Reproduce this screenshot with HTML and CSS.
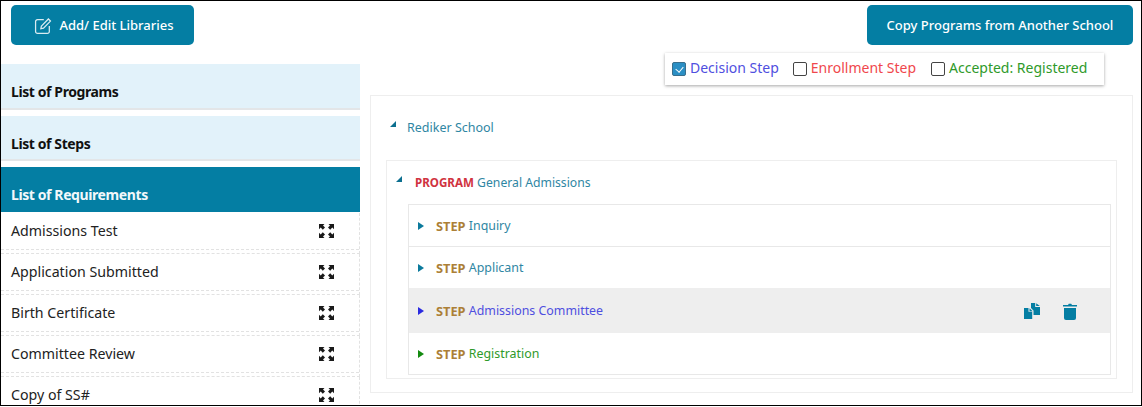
FILE: index.html
```html
<!DOCTYPE html>
<html lang="en">
<head>
    <meta charset="UTF-8">
    <meta name="viewport" content="width=device-width, initial-scale=1.0">
    <title>Programs</title>
    <link rel="stylesheet" href="styles.css">
</head>
<body>
    <div class="frame">
        <div class="top-bar">
            <button type="button" class="btn btn-libraries">
                <svg class="edit-icon" viewBox="0 0 18 18" width="19" height="19" fill="none" stroke="currentColor" stroke-width="1.2">
                    <path d="M14.500 9.500v5.200a1.800 1.800 0 0 1-1.800 1.800H3.300a1.800 1.800 0 0 1-1.800-1.800V5.300a1.800 1.800 0 0 1 1.800-1.800h6"/>
                    <path d="M7 9.600 13.600 2.800l2 2L9 11.600l-2.500.5z"/>
                </svg>
                Add/ Edit Libraries
            </button>
            <button type="button" class="btn btn-copy">Copy Programs from Another School</button>
        </div>

        <div class="content">
            <div class="sidebar">
                <div class="side-head">List of Programs</div>
                <div class="side-head side-head-steps">List of Steps</div>
                <div class="side-head active">List of Requirements</div>
                <div class="req-row"><span>Admissions Test</span><svg class="expand"><use href="#expand-icon"/></svg></div>
                <div class="req-row"><span>Application Submitted</span><svg class="expand"><use href="#expand-icon"/></svg></div>
                <div class="req-row"><span>Birth Certificate</span><svg class="expand"><use href="#expand-icon"/></svg></div>
                <div class="req-row"><span>Committee Review</span><svg class="expand"><use href="#expand-icon"/></svg></div>
                <div class="req-row"><span>Copy of SS#</span><svg class="expand"><use href="#expand-icon"/></svg></div>
            </div>

            <div class="main">
                <div class="legend">
                    <label class="legend-item blue"><input type="checkbox" checked>Decision Step</label>
                    <label class="legend-item red"><input type="checkbox">Enrollment Step</label>
                    <label class="legend-item green"><input type="checkbox">Accepted: Registered</label>
                </div>

                <div class="tree">
                    <div class="school"><svg class="arrow-open" viewBox="0 0 8 8"><path d="M7 1v6H1z"/></svg>Rediker School</div>
                    <div class="program">
                        <div class="program-title"><svg class="arrow-open" viewBox="0 0 8 8"><path d="M7 1v6H1z"/></svg><b class="tag-program">PROGRAM</b> General Admissions</div>
                        <div class="steps">
                            <div class="step step-inquiry"><svg class="arrow" viewBox="0 0 6 8"><path d="M0 0l6 4-6 4z"/></svg><b class="tag-step">STEP</b>&nbsp;Inquiry</div>
                            <div class="step step-applicant"><svg class="arrow" viewBox="0 0 6 8"><path d="M0 0l6 4-6 4z"/></svg><b class="tag-step">STEP</b>&nbsp;Applicant</div>
                            <div class="step step-committee">
                                <svg class="arrow" viewBox="0 0 6 8"><path d="M0 0l6 4-6 4z"/></svg><b class="tag-step">STEP</b>&nbsp;Admissions Committee
                                <div class="step-actions">
                                    <svg viewBox="0 0 18 18" width="18" height="18" fill="#047ea3">
                                        <path d="M1 6h4.500v3.800h3.700V17H1z"/>
                                        <path d="M6.500 6.200 9.700 9.200H6.500z"/>
                                        <path d="M8 1h4.200v4H17v8h-6.500V8.500L8 6z"/>
                                        <path d="M13.200 1.200 16.800 4h-3.600z"/>
                                    </svg>
                                    <svg viewBox="0 0 16 18" width="16" height="18" fill="#047ea3">
                                        <path d="M1 3h5l.8-1.200h2.400L10 3h5v1.500H1z"/>
                                        <path d="M2 6h12v10a2 2 0 0 1-2 2H4a2 2 0 0 1-2-2z"/>
                                    </svg>
                                </div>
                            </div>
                            <div class="step step-registration"><svg class="arrow" viewBox="0 0 6 8"><path d="M0 0l6 4-6 4z"/></svg><b class="tag-step">STEP</b>&nbsp;Registration</div>
                        </div>
                    </div>
                </div>
            </div>
        </div>
    </div>

    <svg width="0" height="0" class="defs">
        <symbol id="expand-icon" viewBox="0 0 15 14">
            <path d="M0 0h5.500L4 1.500 6 3.500 3.800 5.700 1.700 3.600 0 5.300z"/>
            <path d="M15 0H9.500L11 1.500 9 3.500l2.200 2.200 2.100-2.100L15 5.300z"/>
            <path d="M0 14h5.500L4 12.500 6 10.500 3.800 8.300 1.700 10.400 0 8.700z"/>
            <path d="M15 14H9.500l1.500-1.500-2-2 2.200-2.200 2.100 2.100L15 8.700z"/>
        </symbol>
    </svg>
</body>
</html>
```

FILE: styles.css
```css
* { box-sizing: border-box; }
body { margin: 0; background-color: white; font-family: "Noto Sans", "Open Sans", sans-serif; font-size: 14px; color: #222; }
.defs { position: absolute; }
.frame { width: 1142px; height: 406px; border: 1px solid black; overflow: hidden; }

.top-bar { display: flex; justify-content: space-between; padding: 4px 8px 0 10px; height: 63px; }
.btn { height: 40px; border: 0; border-radius: 5px; background-color: #047ea3; color: white; font-family: inherit; font-size: 13px; font-weight: 500; display: flex; align-items: center; justify-content: center; padding: 0; }
.btn-libraries { width: 183px; gap: 6px; padding-left: 3px; }
.btn-copy { width: 266px; }
.edit-icon { opacity: .85; }

.content { display: flex; }
.sidebar { width: 359px; flex-shrink: 0; }
.side-head { height: 46px; margin-bottom: 6px; padding: 18px 10px 0; background-color: #e2f2fa; border-bottom: 2px solid #e3e6e8; font-weight: 700; font-size: 14px; letter-spacing: -.4px; color: #111; }
.side-head-steps { height: 45px; }
.side-head.active { height: 45px; margin-bottom: 1px; background-color: #047ea3; border-bottom: 0; color: #f2f8fb; }
.req-row { height: 41px; display: flex; align-items: center; justify-content: space-between; padding: 0 25px 5px 10px; border-bottom: 1px dashed #e2e2e2; border-right: 1px dashed #e2e2e2; font-size: 14.2px; color: #222; position: relative; }
.req-row::after { content: ""; position: absolute; left: 0; right: 0; bottom: 3px; border-bottom: 1px dashed #e2e2e2; }
.expand { width: 15px; height: 14px; fill: #1a1a1a; }

.main { flex: 1; padding: 0 8px 0 10px; }
.legend { width: 439px; height: 32px; margin: -11px 0 10px 295px; padding: 0 6px 3px; display: flex; align-items: center; background-color: white; box-shadow: 0 1px 3px rgba(0, 0, 0, .35); font-size: 14px; white-space: nowrap; }
.legend-item { display: flex; align-items: center; margin-right: 14px; }
.legend-item:first-child { margin-right: 13px; }
.legend-item input { appearance: none; width: 14px; height: 14px; margin: 3px 4px 0 1px; border: 1.5px solid #444; border-radius: 2px; background-color: white; position: relative; }
.legend-item input:checked { background-color: #2b8fc4; border-color: #3a6f8c; }
.legend-item input:checked::after { content: ""; position: absolute; left: 3.5px; top: 2px; width: 4px; height: 6px; border: solid white; border-width: 0 1.2px 1.2px 0; transform: rotate(40deg); }
.blue { color: #4f4fe0; }
.red { color: #f0474c; }
.green { color: #2f9a2a; }

.tree { height: 298px; border: 1px solid #eee; padding: 0 15px; }
.school { height: 64px; display: flex; align-items: center; padding-left: 3px; padding-bottom: 1px; font-size: 12.5px; color: #2f86a3; }
.arrow-open { width: 8px; height: 8px; margin-right: 10px; margin-top: -8px; fill: #0c6f8f; }
.program { height: 219px; border: 1px solid #eee; padding: 0 5px 0 21px; }
.program-title { height: 43px; display: flex; align-items: center; margin-left: -13px; font-size: 12.2px; color: #2f86a3; white-space: pre; }
.program-title .arrow-open { margin-right: 12px; }
.tag-program { color: #d0333f; font-size: 11.6px; }
.steps { border: 1px solid #e8e8e8; height: 171px; }
.step { height: 42px; display: flex; align-items: center; padding-left: 9px; border-bottom: 1px solid #e8e8e8; font-size: 12.4px; }
.arrow { width: 6px; height: 8px; margin-right: 12px; fill: #0b7a9c; }
.tag-step { color: #ac7f37; font-size: 12.8px; }
.step-inquiry, .step-applicant { color: #2f86a3; }
.step-applicant { height: 41px; border-bottom: 0; }
.step-committee { height: 45px; background-color: #eeeeee; color: #4f4fe0; border-bottom: 0; }
.step-committee .arrow { fill: #2a2ae0; }
.step-registration { height: 41px; color: #2f9a2a; border-bottom: 0; }
.step-registration .arrow { fill: #138a10; }
.step-actions { margin-left: auto; margin-right: 32px; display: flex; gap: 21px; align-items: center; }
```
